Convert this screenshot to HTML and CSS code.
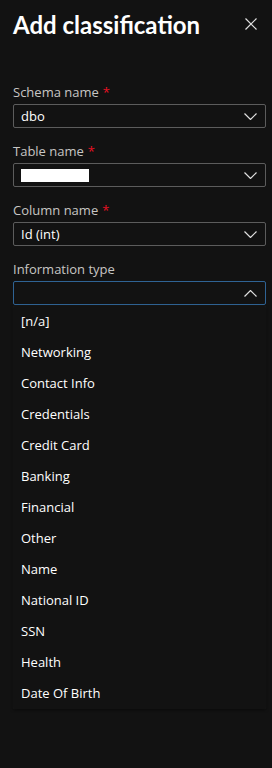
FILE: index.html
```html
<!DOCTYPE html>
<html lang="en">
<head>
  <meta charset="UTF-8" />
  <title>Add classification</title>
  <link rel="stylesheet" href="styles.css">
</head>
<body>
  <div class="panel">
    <div class="panel-header">
      <h1>Add classification</h1>
      <button class="close" aria-label="Close">
        <svg width="12" height="12" viewBox="0 0 12 12"><path d="M0.5 0.5 L11.5 11.5 M11.5 0.5 L0.5 11.5" stroke="#e0e0e0" stroke-width="1.2" fill="none"/></svg>
      </button>
    </div>

    <div class="field">
      <label>Schema name<span class="required">*</span></label>
      <div class="select">
        <span class="value">dbo</span>
        <svg class="chevron" width="13" height="7" viewBox="0 0 13 7"><path d="M0.5 0.5 L6.5 6.5 L12.5 0.5" stroke="#e0e0e0" stroke-width="1.2" fill="none"/></svg>
      </div>
    </div>

    <div class="field">
      <label>Table name<span class="required">*</span></label>
      <div class="select">
        <span class="value redacted"></span>
        <svg class="chevron" width="13" height="7" viewBox="0 0 13 7"><path d="M0.5 0.5 L6.5 6.5 L12.5 0.5" stroke="#e0e0e0" stroke-width="1.2" fill="none"/></svg>
      </div>
    </div>

    <div class="field">
      <label>Column name<span class="required">*</span></label>
      <div class="select">
        <span class="value">Id (int)</span>
        <svg class="chevron" width="13" height="7" viewBox="0 0 13 7"><path d="M0.5 0.5 L6.5 6.5 L12.5 0.5" stroke="#e0e0e0" stroke-width="1.2" fill="none"/></svg>
      </div>
    </div>

    <div class="field open">
      <label>Information type</label>
      <div class="select focused">
        <span class="value"></span>
        <svg class="chevron" width="13" height="7" viewBox="0 0 13 7"><path d="M0.5 6.5 L6.5 0.5 L12.5 6.5" stroke="#e0e0e0" stroke-width="1.2" fill="none"/></svg>
      </div>
      <ul class="options">
        <li>[n/a]</li>
        <li>Networking</li>
        <li>Contact Info</li>
        <li>Credentials</li>
        <li>Credit Card</li>
        <li>Banking</li>
        <li>Financial</li>
        <li>Other</li>
        <li>Name</li>
        <li>National ID</li>
        <li>SSN</li>
        <li>Health</li>
        <li>Date Of Birth</li>
      </ul>
    </div>
  </div>
</body>
</html>
```

FILE: styles.css
```css
body {
  margin: 0;
  background: #121212;
  font-family: 'Open Sans', sans-serif;
  color: #f3f2f1;
}

.panel {
  padding: 6px 6px 0 13px;
}

.panel-header {
  display: flex;
  align-items: center;
  justify-content: space-between;
  height: 36px;
  margin-bottom: 40px;
}

h1 {
  margin: 0;
  font-family: 'Lato', sans-serif;
  font-size: 24px;
  font-weight: 700;
  color: #ffffff;
}

.close {
  background: none;
  border: none;
  padding: 0;
  width: 32px;
  height: 32px;
  margin-right: -1px;
  display: flex;
  align-items: center;
  justify-content: center;
}

.field {
  margin-bottom: 13px;
}

.field label {
  display: block;
  height: 20px;
  line-height: 20px;
  font-size: 13px;
  color: #c8c6c4;
  margin-bottom: 2px;
}

.required {
  color: #e81123;
  margin-left: 4px;
}

.select {
  display: flex;
  align-items: center;
  justify-content: space-between;
  height: 22px;
  border: 1px solid #5c5c5c;
  border-radius: 2px;
  padding: 0 8px 0 7px;
}

.select.focused {
  border-color: #2f6394;
}

.value {
  font-size: 13px;
  color: #ffffff;
}

.redacted {
  display: block;
  width: 68px;
  height: 13px;
  background: #ffffff;
}

.options {
  list-style: none;
  margin: 1px 0 0;
  padding: 0;
  background: #121212;
  box-shadow: 0 1px 3px rgba(0, 0, 0, 0.6), 0 0 1px rgba(90, 90, 90, 0.5);
  border-radius: 2px;
}

.options li {
  height: 31px;
  line-height: 31px;
  padding-left: 8px;
  font-size: 13px;
  color: #ffffff;
}
```
